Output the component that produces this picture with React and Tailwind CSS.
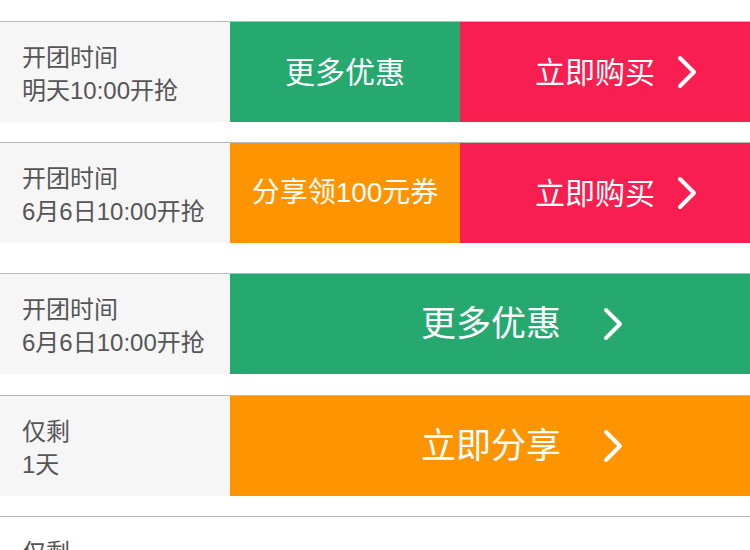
import React from "react";

const FONT = { fontFamily: '"Liberation Sans", "Noto Sans CJK SC", sans-serif' };

function Chevron() {
  return (
    <svg width="20" height="34" viewBox="0 0 20 34" className="shrink-0">
      <polyline points="3,3 17,17 3,31" fill="none" stroke="#ffffff" strokeWidth="4" strokeLinecap="round" strokeLinejoin="round" />
    </svg>
  );
}

function Left({ a, b, white }) {
  return (
    <div className={`w-[230px] shrink-0 flex flex-col justify-center pl-[22px] pt-[4px] text-[24px] leading-[33px] text-[#555] ${white ? "bg-white" : "bg-[#f6f6f6]"}`}>
      <div>{a}</div>
      <div>{b}</div>
    </div>
  );
}

export default function App() {
  return (
    <div className="w-[750px] h-[550px] overflow-hidden bg-white" style={FONT}>
      <div className="pt-[21px] flex flex-col">
        {/* Row 1 */}
        <div className="flex h-[101px] border-t border-[#b8b8b8]">
          <Left a="开团时间" b="明天10:00开抢" />
          <div className="w-[230px] shrink-0 bg-[#26a96f] flex items-center justify-center text-white text-[30px]">更多优惠</div>
          <div className="flex-1 bg-[#f81e4f] flex items-center pl-[75px] text-white text-[30px] gap-[22px]">
            <span>立即购买</span>
            <Chevron />
          </div>
        </div>
        {/* Row 2 */}
        <div className="flex h-[101px] border-t border-[#b8b8b8] mt-[20px]">
          <Left a="开团时间" b="6月6日10:00开抢" />
          <div className="w-[230px] shrink-0 bg-[#fe9400] flex items-center justify-center text-white text-[28px]">分享领100元券</div>
          <div className="flex-1 bg-[#f81e4f] flex items-center pl-[75px] text-white text-[30px] gap-[22px]">
            <span>立即购买</span>
            <Chevron />
          </div>
        </div>
        {/* Row 3 */}
        <div className="flex h-[101px] border-t border-[#b8b8b8] mt-[30px]">
          <Left a="开团时间" b="6月6日10:00开抢" />
          <div className="flex-1 bg-[#26a96f] flex items-center pl-[191px] text-white text-[35px] gap-[42px]">
            <span>更多优惠</span>
            <Chevron />
          </div>
        </div>
        {/* Row 4 */}
        <div className="flex h-[101px] border-t border-[#b8b8b8] mt-[21px]">
          <Left a="仅剩" b="1天" />
          <div className="flex-1 bg-[#fe9400] flex items-center pl-[191px] text-white text-[35px] gap-[42px]">
            <span>立即分享</span>
            <Chevron />
          </div>
        </div>
        {/* Row 5 */}
        <div className="flex h-[101px] border-t border-[#b8b8b8] mt-[20px]">
          <Left a="仅剩" b="1天" white />
        </div>
      </div>
    </div>
  );
}
